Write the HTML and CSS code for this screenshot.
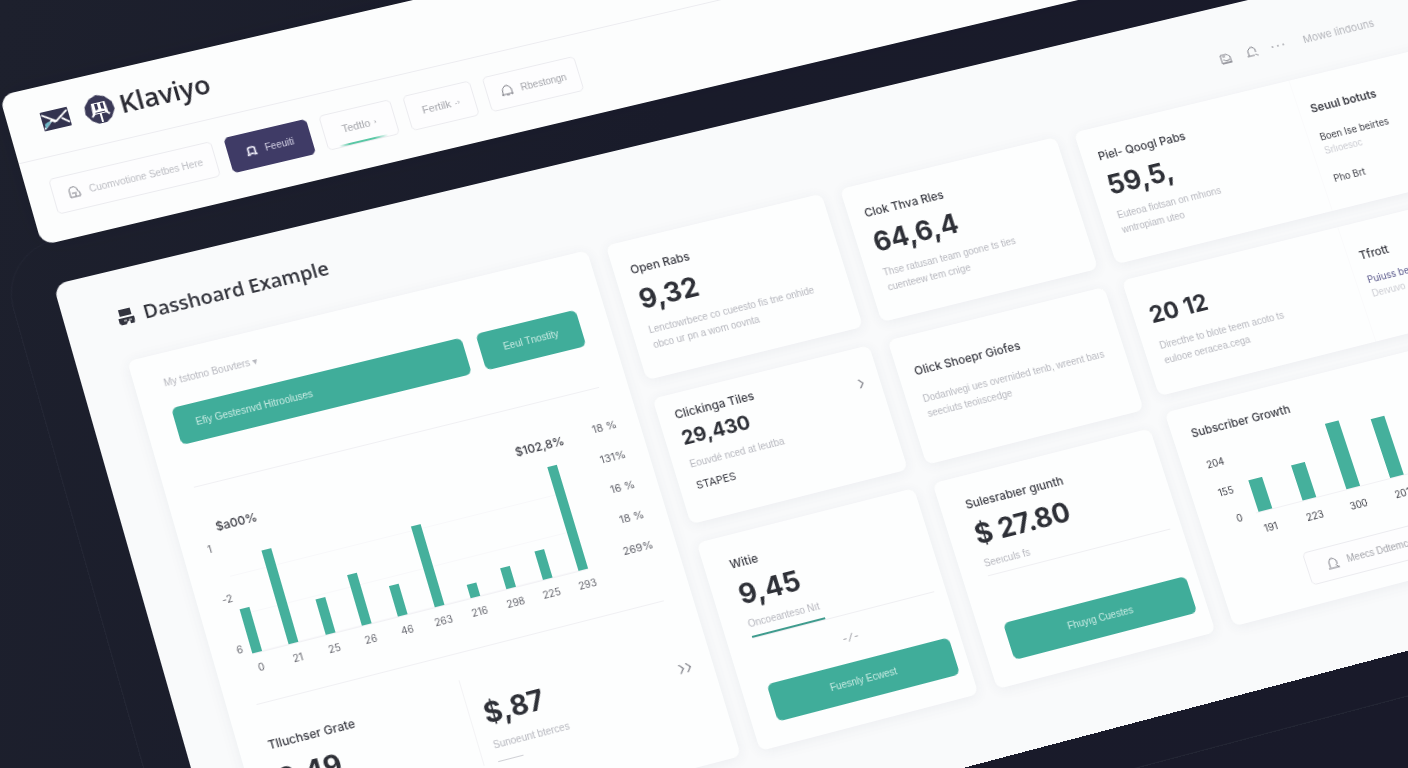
FILE: index.html
```
<!DOCTYPE html>
<html lang="en">
<head>
    <meta charset="UTF-8">
    <meta name="viewport" content="width=device-width, initial-scale=1.0">
    <title>Klaviyo - Dashboard Example</title>
    <link rel="stylesheet" href="styles.css">
</head>
<body>
    <div class="scene">
        <header class="topbar">
            <div class="brand">
                <svg class="brand-mail" viewBox="0 0 28 20" aria-hidden="true">
                    <rect width="28" height="20" rx="1" fill="#33334f"/>
                    <path d="M1 3l13 9L27 3" fill="none" stroke="#fff" stroke-width="2"/>
                    <path d="M1 18l9-8 3 3M27 16l-7-6" fill="none" stroke="#fff" stroke-width="2"/>
                    <path d="M2 13l4-2 3 1-7 6z" fill="#6fb7c6"/>
                </svg>
                <svg class="brand-mark" viewBox="0 0 30 30" aria-hidden="true">
                    <path d="M15 0l8 3 6 7 1 8-5 8-6 4h-8l-6-4-5-8 1-8 6-7z" fill="#3a3957"/>
                    <path d="M8 8h14l1 12H7z" fill="#fff"/>
                    <path d="M11 9h3v6l-3 1zM17 9h3v7l-3-1zM10 18h10v1H10z" fill="#3a3957"/>
                    <path d="M6 22l3-3M24 22l-3-3M15 19v10" fill="none" stroke="#fff" stroke-width="2"/>
                </svg>
                <span class="brand-name">Klaviyo</span>
            </div>
            <nav class="nav">
                <label class="nav-item search">
                    <svg class="icon" viewBox="0 0 14 14"><path d="M2 12V6a4 4 0 0 1 8-1l2 4v3zM4 8h5M7 12l1-3"/></svg>
                    <input type="text" placeholder="Cuomvotione Setbes Here" aria-label="Search">
                </label>
                <button type="button" class="nav-item active">
                    <svg class="icon" viewBox="0 0 14 14"><path d="M3 11V4l2-1h4l2 1v7M1 12h4M9 12h4M5 11h4"/></svg>
                    Feeuiti
                </button>
                <button type="button" class="nav-item tab-line">Tedtlo <small>›</small></button>
                <button type="button" class="nav-item tab">Fertilk <small>-›</small></button>
                <button type="button" class="nav-item tab-wide">
                    <svg class="icon" viewBox="0 0 14 14"><path d="M2 11l1-6 3-3h3l3 4v5zM1 11l2 1M11 12l2-1M6 12h3"/></svg>
                    Rbestongn
                </button>
            </nav>
        </header>

        <main class="panel">
            <div class="panel-head">
                <svg class="panel-icon" viewBox="0 0 16 16" aria-hidden="true">
                    <path d="M2 0h12v7H2zM0 9h16v3l-1 4h-4v-3H9l-3 4H3l-3-3z" fill="#33343f"/>
                    <path d="M5 12h3M10 12h3" stroke="#fff" stroke-width="1"/>
                </svg>
                <h1>Dasshoard Example</h1>
                <div class="tools">
                    <svg class="icon" viewBox="0 0 14 14"><path d="M2 12V3h7l3 3v6zM4 5h3M4 8l3 2 4-1M2 12h11"/></svg>
                    <svg class="icon" viewBox="0 0 14 14"><path d="M3 11V5l3-3h3l2 3v3M1 11h8M10 10l3 2"/></svg>
                    <svg class="icon" viewBox="0 0 14 14"><path d="M0 7h2M6 7h2M12 7h2"/></svg>
                    <a href="#">Mowe Iindouns</a>
                </div>
            </div>

            <div class="board">
                <section class="card overview">
                    <div class="filters">
                        <p class="muted">My tstotno Bouvters ▾</p>
                        <div class="filter-row">
                            <button type="button" class="btn btn-left">Efiy Gestesnvd Hitrooluses</button>
                            <button type="button" class="btn btn-side">Eeul Tnostity</button>
                        </div>
                    </div>

                    <div class="chart">
                        <div class="chart-head"><span>$a00%</span><span>$102,8%</span></div>
                        <div class="axis-left"><span>1</span><span>-2</span><span>6</span></div>
                        <div class="plot">
                            <div class="bar" style="height: 46px"></div>
                            <div class="bar" style="height: 98px"></div>
                            <div class="bar" style="height: 37px"></div>
                            <div class="bar" style="height: 53px"></div>
                            <div class="bar" style="height: 32px"></div>
                            <div class="bar" style="height: 85px"></div>
                            <div class="bar" style="height: 14px"></div>
                            <div class="bar" style="height: 22px"></div>
                            <div class="bar" style="height: 30px"></div>
                            <div class="bar" style="height: 110px"></div>
                        </div>
                        <div class="axis-x">
                            <span>0</span><span>21</span><span>25</span><span>26</span><span>46</span>
                            <span>263</span><span>216</span><span>298</span><span>225</span><span>293</span>
                        </div>
                        <div class="axis-right">
                            <span>18 %</span><span>131%</span><span>16 %</span><span>18 %</span><span>269%</span>
                        </div>
                    </div>

                    <div class="totals">
                        <div class="total">
                            <h2>Tlluchser Grate</h2>
                            <p class="number">0.49</p>
                        </div>
                        <div class="total total-right">
                            <p class="number">$,87</p>
                            <p class="muted">Sunoeunt bterces</p>
                            <span class="more">››</span>
                        </div>
                    </div>
                </section>

                <div class="column">
                    <section class="card stat">
                        <h2>Open Rabs</h2>
                        <p class="number">9,32</p>
                        <p class="muted">Lenctowrbece co cueesto fis tne onhide<br>obco ur pn a wom oovnta</p>
                    </section>
                    <section class="card stat compact">
                        <h2>Clickinga Tiles</h2>
                        <p class="number small">29,430</p>
                        <p class="muted">Eouvdé nced at leutba</p>
                        <p class="note">STAPES</p>
                        <span class="more">›</span>
                    </section>
                    <section class="card action">
                        <h2>Witie</h2>
                        <p class="number">9,45</p>
                        <p class="muted">Oncoeanteso Nıt</p>
                        <div class="progress"><div class="progress-bar"></div></div>
                        <p class="hint">- ⁄ -</p>
                        <button type="button" class="btn">Fuesnly Ecwest</button>
                    </section>
                </div>

                <div class="column">
                    <section class="card stat">
                        <h2>Clok Thva Rles</h2>
                        <p class="number">64,6,4</p>
                        <p class="muted">Thse ratusan team goone ts ties<br>cuenteew tem cnige</p>
                    </section>
                    <section class="card stat plain">
                        <h2>Olick Shoepr Giofes</h2>
                        <p class="muted">Dodanlvegi ues overnided tenb, wreent baıs<br>seeciuts teoiıscedge</p>
                    </section>
                    <section class="card action">
                        <h2>Sulesrabıer gıunth</h2>
                        <p class="number">$ 27.80</p>
                        <p class="muted">Seeıculs fs</p>
                        <div class="progress"></div>
                        <button type="button" class="btn">Fhuyıg Cuestes</button>
                    </section>
                </div>

                <div class="column last">
                    <section class="card split">
                        <div class="stat">
                            <h2>Piel- Qoogl Pabs</h2>
                            <p class="number">59,5,</p>
                            <p class="muted">Euteoa fiotsan on mhıons<br>wntropiam uteo</p>
                        </div>
                        <div class="side">
                            <h3>Seuul botuts</h3>
                            <p>Boen Ise beirtes</p>
                            <p class="muted">Srlıoesoc</p>
                            <p class="side-foot">Pho Brt</p>
                        </div>
                    </section>
                    <section class="card split">
                        <div class="stat">
                            <p class="number medium">20 12</p>
                            <p class="muted">Directhe to blote teem acoto ts<br>eulooe oeracea.cega</p>
                        </div>
                        <div class="side side-low">
                            <h3>Tfrott</h3>
                            <p><a href="#">Puiuss bev</a></p>
                            <p class="muted">Deıvuvo</p>
                        </div>
                    </section>
                    <section class="card growth">
                        <h2>Subscriber Growth</h2>
                        <div class="mini-chart">
                            <div class="mini-axis"><span>204</span><span>155</span><span>0</span></div>
                            <div class="mini-plot">
                                <div class="bar" style="height: 34px"></div>
                                <div class="bar" style="height: 38px"></div>
                                <div class="bar" style="height: 71px"></div>
                                <div class="bar" style="height: 64px"></div>
                            </div>
                            <div class="mini-x"><span>191</span><span>223</span><span>300</span><span>201</span></div>
                        </div>
                        <button type="button" class="nav-item outline-btn">
                            <svg class="icon" viewBox="0 0 14 14"><path d="M3 11V5l2-3h3l3 3v4M1 12h12M9 9l3 3"/></svg>
                            Meecs Ddtemce.
                        </button>
                    </section>
                </div>
            </div>
        </main>
    </div>
</body>
</html>
```

FILE: styles.css
```
* {
    box-sizing: border-box;
}
html, body {
    height: 100%;
}
body {
    margin: 0;
    overflow: hidden;
    background: linear-gradient(100deg, #1d202d 0%, #191b2a 45%, #191a2a 100%);
    color: #3a3b43;
    font-family: Inter, "Liberation Sans", sans-serif;
    font-size: 12px;
}
h1, h2, h3, p {
    margin: 0;
}
button, input {
    font: inherit;
    color: inherit;
}
a {
    color: inherit;
    text-decoration: none;
}

/* the whole page lies on one tilted plane */
.scene {
    display: flow-root;
    width: 100vw;
    height: 100vh;
    transform: perspective(6800px) rotate(-15.5deg) rotate3d(1, 1, 0, 19deg);
}

/* Header */
.topbar {
    position: relative;
    z-index: 1;
    margin: -76px -216px 42px 101px;
    background: #fcfdfd;
    border-radius: 14px;
    box-shadow: 0 0 30px rgba(20, 20, 40, 0.1);
}
.brand {
    display: flex;
    align-items: center;
    height: 74px;
    padding: 0 34px;
    border-bottom: 1px solid #ececf0;
}
.brand-mail {
    width: 28px;
    height: 20px;
    margin-right: 16px;
}
.brand-mark {
    width: 30px;
    height: 30px;
    margin-right: 6px;
}
.brand-name {
    font: 600 27px/36px "Open Sans", sans-serif;
    color: #2b2b33;
}
.nav {
    display: flex;
    gap: 13px;
    padding: 22px 24px 27px;
}
.nav-item {
    display: flex;
    align-items: center;
    justify-content: center;
    gap: 8px;
    height: 38px;
    padding: 0;
    border: 1px solid #ebebef;
    border-radius: 5px;
    background-color: #fdfdfe;
    color: #a3a4aa;
    font-family: "Liberation Sans", sans-serif;
    font-size: 10px;
}
.nav-item small {
    font-size: 8px;
}
.icon {
    flex: none;
    width: 14px;
    height: 14px;
    fill: none;
    stroke: #7c7d85;
    stroke-width: 1;
}
.search {
    width: 168px;
    padding: 0 10px 0 14px;
}
.search input {
    width: 100%;
    min-width: 0;
    padding: 0;
    border: 0;
    background: none;
}
.search input::placeholder {
    color: #bbbcc2;
    opacity: 1;
}
.active {
    width: 86px;
    border-color: #3f3b66;
    background-color: #3f3b66;
    color: #d5d3e6;
}
.active .icon {
    width: 12px;
    height: 12px;
    stroke: #f0effa;
    stroke-width: 2;
}
.tab {
    width: 71px;
}
.tab-line {
    width: 75px;
    background-image: linear-gradient(90deg, transparent 15%, #58c7a4 30%, #58c7a4 65%, transparent 85%);
    background-position: bottom;
    background-repeat: no-repeat;
    background-size: 100% 2px;
}
.tab, .tab-line {
    gap: 4px;
    font-size: 11px;
}
.tab-wide {
    width: 98px;
}

/* Panel */
.panel {
    margin: 0 -216px 0 101px;
    padding: 0 50px 68px;
    background: #f9fafb;
    border-radius: 14px;
    outline: 1px solid #232634;
    outline-offset: 44px;
}
.panel-head {
    display: flex;
    align-items: center;
    height: 94px;
    padding-top: 4px;
}
.panel-icon {
    width: 16px;
    height: 16px;
    margin: 0 10px 0 3px;
}
.panel-head h1 {
    font: 600 20px/28px "Open Sans", sans-serif;
    color: #33343c;
}
.tools {
    display: flex;
    align-items: center;
    gap: 15px;
    margin: 12px 0 0 auto;
    padding-right: 76px;
    color: #b4b5bb;
    font-size: 11px;
}
.tools a {
    padding-left: 6px;
}
.board {
    display: grid;
    grid-template-columns: 478fr 230fr 234fr 421fr;
    gap: 20px;
}
.column {
    display: grid;
    grid-template-rows: 145px 134px 219px;
    gap: 20px;
    min-width: 0;
}
.column.last {
    grid-template-rows: 145px 126px 230px;
    gap: 18px;
}
.card {
    position: relative;
    min-width: 0;
    background: #fdfefe;
    border-radius: 8px;
    box-shadow: 0 2px 14px rgba(60, 70, 100, 0.07);
}
h2 {
    font-size: 12px;
    font-weight: 500;
    line-height: 20px;
}
.number {
    margin-top: 5px;
    color: #2e3037;
    font-size: 28px;
    font-weight: 700;
    line-height: 34px;
    white-space: nowrap;
}
.muted {
    color: #b6b7be;
    font-family: "Liberation Sans", sans-serif;
    font-size: 10px;
    line-height: 16px;
    white-space: nowrap;
}
.btn {
    height: 39px;
    border: 0;
    border-radius: 6px;
    background: #40ad9a;
    color: #c9ebe3;
    font-family: "Liberation Sans", sans-serif;
    font-size: 10px;
}
.more {
    position: absolute;
    top: 22px;
    right: 16px;
    color: #7d7e86;
    font-size: 20px;
    font-weight: 300;
    line-height: 28px;
}

/* Overview card */
.overview {
    padding: 0 29px;
}
.filters {
    height: 141px;
    padding-top: 23px;
    border-bottom: 1px solid #f0f0f3;
}
.filter-row {
    display: flex;
    gap: 15px;
    margin-top: 18px;
}
.btn-left {
    flex: 1;
    padding: 0 20px;
    text-align: left;
}
.btn-side {
    width: 105px;
}
.chart {
    display: grid;
    grid-template-columns: 10px 1fr 64px;
    grid-template-rows: 32px 121px 28px;
    margin-top: 24px;
    height: 203px;
    border-bottom: 1px solid #f0f0f3;
    color: #63646c;
    font-size: 10px;
    line-height: 16px;
}
.chart-head {
    grid-column: 2 / 3;
    display: flex;
    justify-content: space-between;
    margin-right: -14px;
    color: #3a3b43;
    font-size: 12px;
    font-weight: 500;
    line-height: 40px;
}
.axis-left {
    grid-area: 2 / 1;
    display: flex;
    flex-direction: column;
    justify-content: space-between;
    margin-left: -4px;
}
.plot {
    grid-area: 2 / 2;
    display: flex;
    align-items: flex-end;
    justify-content: space-between;
    border-bottom: 1px solid #f1f1f4;
    background: repeating-linear-gradient(#fdfefe 0 39px, #f8f8fa 39px 40px);
}
.bar {
    width: 10px;
    background: #45b09c;
}
.axis-x {
    grid-area: 3 / 2;
    display: flex;
    justify-content: space-between;
    padding-top: 6px;
}
.axis-x span, .mini-x span {
    display: flex;
    justify-content: center;
    width: 10px;
}
.axis-right {
    grid-area: 1 / 3 / 4 / 4;
    margin-right: -6px;
    font-size: 11px;
    line-height: 32px;
    text-align: right;
}
.axis-right span {
    display: block;
}
.totals {
    display: flex;
}
.total {
    flex: 1;
    padding-top: 32px;
}
.total .number {
    margin-top: 8px;
}
.total-right {
    position: relative;
    margin: 26px 0 20px;
    padding: 14px 0 0 14px;
    border-left: 1px solid #f3f3f5;
}
.total:first-child {
    flex: 0 0 199px;
}
.total-right .muted {
    margin-top: 8px;
}
.total-right .muted::after {
    content: "";
    display: block;
    width: 26px;
    margin-top: 8px;
    border-bottom: 1px solid #cfd0d5;
}
.total-right .more {
    top: 30px;
    right: -8px;
}

/* Stat cards */
.stat {
    padding: 21px 17px 0;
}
.stat .muted {
    margin-top: 8px;
}
.compact {
    padding-top: 12px;
}
.compact .number {
    margin-top: 3px;
}
.small {
    font-size: 20px;
    line-height: 24px;
}
.medium {
    font-size: 24px;
}
.note {
    margin-top: 6px;
    font-size: 11px;
    line-height: 16px;
}
.plain {
    padding-top: 28px;
}
.plain .muted {
    margin-top: 12px;
}
.action {
    display: flex;
    flex-direction: column;
    padding: 20px 12px 24px 26px;
}
.action .muted {
    margin-top: 6px;
}
.progress {
    margin-top: 4px;
    border-bottom: 1px solid #efeff2;
}
.progress-bar {
    width: 40%;
    border-bottom: 2px solid #3f9c8e;
}
.hint {
    margin-top: 15px;
    color: #8b8c93;
    font-size: 10px;
    line-height: 16px;
    text-align: center;
}
.action .btn {
    margin-top: auto;
}

/* Cards with a side list */
.split {
    display: flex;
}
.split .stat {
    width: 237px;
}
.side {
    flex: 1;
    padding: 25px 12px 0;
    border-left: 1px solid #fafafb;
    font-size: 10px;
    line-height: 16px;
    white-space: nowrap;
}
.side h3 {
    margin-bottom: 13px;
    font-size: 12px;
    font-weight: 600;
    line-height: 20px;
}
.side .muted {
    margin-top: 0;
    color: #cbccd2;
}
.side .side-foot {
    margin-top: 14px;
}
.side a {
    color: #57568a;
}
.side-low h3 {
    margin-bottom: 8px;
    font-weight: 500;
}

/* Subscriber growth */
.growth {
    padding: 18px 18px 0 20px;
}
.mini-chart {
    display: grid;
    grid-template-columns: 24px 1fr;
    grid-template-rows: 82px 28px;
    column-gap: 15px;
    margin-top: 4px;
    font-size: 10px;
    line-height: 16px;
}
.mini-axis {
    display: flex;
    flex-direction: column;
    justify-content: space-between;
    margin-bottom: -8px;
    padding-top: 13px;
    text-align: right;
}
.mini-plot, .mini-x {
    display: flex;
    align-items: flex-end;
    gap: 33px;
}
.mini-plot {
    padding-left: 3px;
    border-bottom: 1px solid #f1f1f4;
}
.mini-plot .bar {
    width: 15px;
}
.mini-x {
    grid-column: 2;
    align-items: flex-start;
    padding: 9px 0 0 3px;
}
.mini-x span {
    width: 15px;
}
.outline-btn {
    width: 140px;
    height: 35px;
    margin: 23px 0 0 72px;
}
```
